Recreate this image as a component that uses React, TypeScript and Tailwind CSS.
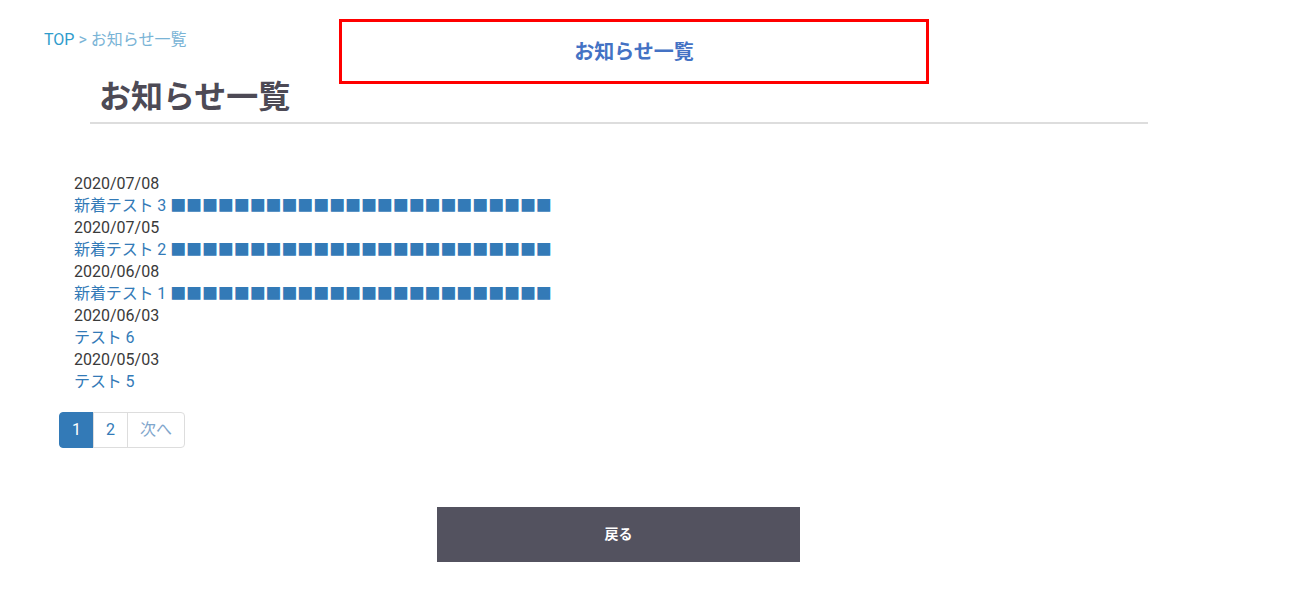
import React from "react";

interface NewsItem {
  date: string;
  title: string;
}

const news: NewsItem[] = [
  { date: "2020/07/08", title: "新着テスト 3 ■■■■■■■■■■■■■■■■■■■■■■■■" },
  { date: "2020/07/05", title: "新着テスト 2 ■■■■■■■■■■■■■■■■■■■■■■■■" },
  { date: "2020/06/08", title: "新着テスト 1 ■■■■■■■■■■■■■■■■■■■■■■■■" },
  { date: "2020/06/03", title: "テスト 6" },
  { date: "2020/05/03", title: "テスト 5" },
];

const font = "font-['Roboto','Noto_Sans_CJK_JP',sans-serif]";

export default function App() {
  return (
    <div className={`min-h-screen bg-white ${font}`}>
      <div className="flex items-start">
        <div className="ml-[44px] mt-[31px] w-[295px] text-[16px] leading-[18px]">
          <a className="text-[#2f9ccc]" href="#">
            TOP
          </a>
          <span className="text-[#7ab4d6]"> &gt; お知らせ一覧</span>
        </div>
        <div className="mt-[19px] flex h-[65px] w-[590px] items-center justify-center border-[3px] border-[#ff0000]">
          <span className="text-[20px] font-bold text-[#4472c4]">
            お知らせ一覧
          </span>
        </div>
      </div>

      <div className="-mt-[6px] ml-[90px] w-[1058px] border-b-2 border-[#dddddd] pb-[6px]">
        <h1 className="pl-[9px] text-[32px] font-bold leading-[38px] text-[#4d4a55]">
          お知らせ一覧
        </h1>
      </div>

      <ul className="ml-[74px] mt-[49px] text-[16px] leading-[22px]">
        {news.map((item) => (
          <li key={item.date}>
            <div className="text-[#3a3a3a]">{item.date}</div>
            <a className="tracking-[-0.1px] text-[#337ab7]" href="#">
              {item.title}
            </a>
          </li>
        ))}
      </ul>

      <nav className="ml-[59px] mt-[19px] flex">
        <span className="rounded-l-[4px] border border-[#337ab7] bg-[#337ab7] px-3 py-[6px] text-[16px] leading-[22px] text-white">
          1
        </span>
        <a
          className="-ml-px border border-[#dddddd] px-3 py-[6px] text-[16px] leading-[22px] text-[#337ab7]"
          href="#"
        >
          2
        </a>
        <a
          className="-ml-px rounded-r-[4px] border border-[#dddddd] px-3 py-[6px] text-[16px] leading-[22px] text-[#7fa6cc]"
          href="#"
        >
          次へ
        </a>
      </nav>

      <div className="ml-[437px] mt-[59px] pb-[38px]">
        <button className="flex h-[55px] w-[363px] items-center justify-center bg-[#53525f] text-[14px] font-bold text-white">
          戻る
        </button>
      </div>
    </div>
  );
}
